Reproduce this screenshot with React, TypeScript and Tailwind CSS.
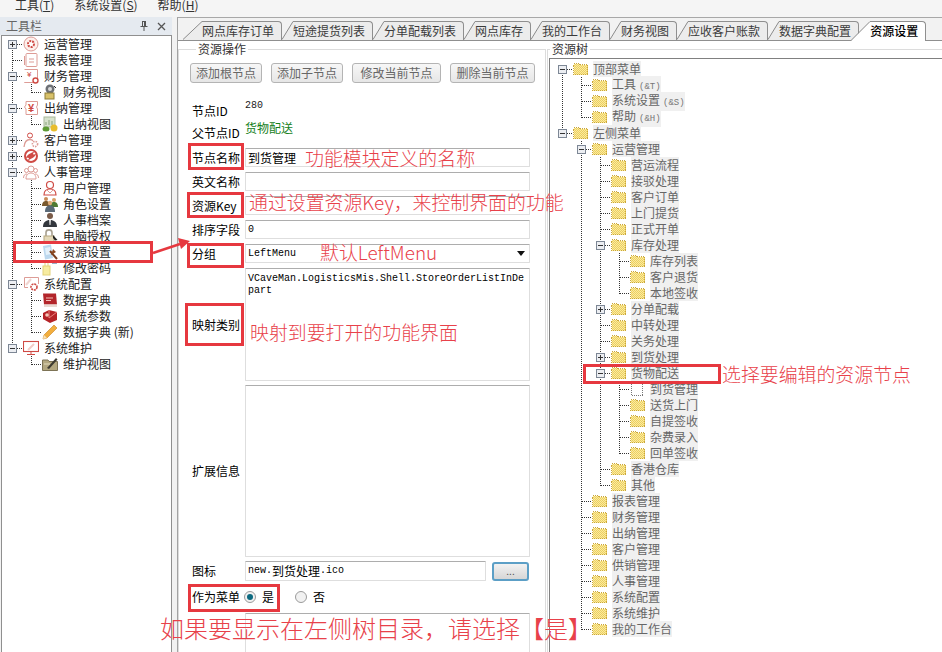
import React from 'react';

type TreeNode = {
  label: React.ReactNode;
  icon?: string;
  open?: boolean;
  children?: TreeNode[];
  closed?: boolean;
};

const cjk = "font-['Noto_Sans_CJK_SC',sans-serif]";
const mono = "font-['Liberation_Mono','Noto_Sans_CJK_SC',monospace]";

const tabs = ['网点库存订单', '短途提货列表', '分单配载列表', '网点库存', '我的工作台', '财务视图', '应收客户账款', '数据字典配置', '资源设置'];

const f = (label: React.ReactNode, children?: TreeNode[], closed?: boolean): TreeNode => ({ label, children, closed });

const Amp = ({ s }: { s: string }) => <span className={`${mono} ml-[3px] text-[9px] text-[#777]`}>{s}</span>;

const leftTree: TreeNode[] = [
  { label: '运营管理', icon: 'gear', closed: true, children: [] },
  { label: '报表管理', icon: 'report' },
  { label: '财务管理', icon: 'finance', children: [{ label: '财务视图', icon: 'financeView' }] },
  { label: '出纳管理', icon: 'cashier', children: [{ label: '出纳视图', icon: 'cashierView' }] },
  { label: '客户管理', icon: 'customer', closed: true, children: [] },
  { label: '供销管理', icon: 'supply', closed: true, children: [] },
  {
    label: '人事管理',
    icon: 'hr',
    children: [
      { label: '用户管理', icon: 'user' },
      { label: '角色设置', icon: 'role' },
      { label: '人事档案', icon: 'archive' },
      { label: '电脑授权', icon: 'lock' },
      { label: '资源设置', icon: 'resource' },
      { label: '修改密码', icon: 'password' },
    ],
  },
  {
    label: '系统配置',
    icon: 'syscfg',
    children: [
      { label: '数据字典', icon: 'dict' },
      { label: '系统参数', icon: 'param' },
      { label: '数据字典 (新)', icon: 'pencil' },
    ],
  },
  { label: '系统维护', icon: 'monitor', children: [{ label: '维护视图', icon: 'maint' }] },
];

const resourceTree: TreeNode[] = [
  f('顶部菜单', [
    f(<>工具<Amp s="(&T)" /></>),
    f(<>系统设置<Amp s="(&S)" /></>),
    f(<>帮助<Amp s="(&H)" /></>),
  ]),
  f('左侧菜单', [
    f('运营管理', [
      f('营运流程'),
      f('接驳处理'),
      f('客户订单'),
      f('上门提货'),
      f('正式开单'),
      f('库存处理', [f('库存列表'), f('客户退货'), f('本地签收')]),
      f('分单配载', [], true),
      f('中转处理'),
      f('关务处理'),
      f('到货处理', [], true),
      f('货物配送', [
        { label: '到货管理', icon: 'blank' },
        f('送货上门'),
        f('自提签收'),
        f('杂费录入'),
        f('回单签收'),
      ]),
      f('香港仓库'),
      f('其他'),
    ]),
    f('报表管理'),
    f('财务管理'),
    f('出纳管理'),
    f('客户管理'),
    f('供销管理'),
    f('人事管理'),
    f('系统配置'),
    f('系统维护'),
    f('我的工作台'),
  ]),
];

function Guide({ on }: { on: boolean }) {
  return (
    <svg width="19" height="16" className="shrink-0" shapeRendering="crispEdges">
      {on && <path d="M9.5 0V16" stroke="#333" strokeDasharray="1 1" />}
    </svg>
  );
}

function Connector({ node, last, first }: { node: TreeNode; last: boolean; first: boolean }) {
  const hasKids = !!node.children;
  return (
    <svg width="19" height="16" className="shrink-0" shapeRendering="crispEdges">
      <path d={`M9.5 ${first ? 8 : 0}V${last ? 9 : 16}`} stroke="#333" strokeDasharray="1 1" />
      <path d="M9.5 8.5H19" stroke="#333" strokeDasharray="1 1" />
      {hasKids && (
        <>
          <rect x="5.5" y="4.5" width="8" height="8" fill="#eceef2" stroke="#7d8795" />
          <path d="M7 8.5H12" stroke="#333" />
          {node.closed && <path d="M9.5 6V11" stroke="#333" />}
        </>
      )}
    </svg>
  );
}

function Folder({ id }: { id: string }) {
  return (
    <svg width="15" height="14" viewBox="0 0 15 14" className="shrink-0" shapeRendering="crispEdges">
      <defs>
        <pattern id={id} width="2" height="2" patternUnits="userSpaceOnUse">
          <rect width="2" height="2" fill="#fbeb9e" />
          <rect width="1" height="1" fill="#eccf62" />
          <rect x="1" y="1" width="1" height="1" fill="#eccf62" />
        </pattern>
      </defs>
      <path d="M0.5 3.5V12.5H14.5V2.5H7L6 1.5H1.5Z" fill={`url(#${id})`} stroke="#c9a63c" strokeDasharray="1 1" />
    </svg>
  );
}

function BlankPage() {
  return (
    <svg width="15" height="14" viewBox="0 0 15 14" className="shrink-0" shapeRendering="crispEdges">
      <rect x="1.5" y="0.5" width="11" height="13" fill="#fff" stroke="#777" strokeDasharray="1 1" />
    </svg>
  );
}

function NavIcon({ name }: { name?: string }) {
  const red = '#cf4b45';
  const pale = '#dd9c96';
  let body: React.ReactNode = null;
  if (name === 'gear')
    body = (
      <>
        <circle cx="8" cy="8" r="7" fill="#fdf0ec" stroke={pale} />
        <circle cx="8" cy="8" r="3" fill="#fff" stroke={red} strokeWidth="2" strokeDasharray="2 1" />
      </>
    );
  if (name === 'report')
    body = (
      <>
        <rect x="3" y="1.5" width="11" height="13" rx="1" fill="#fff" stroke={pale} />
        <path d="M1.5 4V13M6 7H11M6 10H11" stroke={pale} />
      </>
    );
  if (name === 'finance')
    body = (
      <>
        <path d="M1.5 1.5H14.5V10M11 14.5H1.5Z" fill="#fff" stroke={pale} />
        <text x="4" y="9" fontSize="8" fill={red} fontFamily="Liberation Sans">¥</text>
        <circle cx="12.5" cy="12.5" r="2.5" fill="#fff" stroke={red} strokeWidth="1.4" />
      </>
    );
  if (name === 'cashier')
    body = (
      <>
        <path d="M3 1.5H14.5V5L13.5 7L14.5 9V14.5H3V9L1.5 7L3 5Z" fill="#fff" stroke={pale} />
        <text x="5" y="12" fontSize="11" fill={red} fontWeight="bold" fontFamily="Liberation Sans">¥</text>
      </>
    );
  if (name === 'customer')
    body = (
      <>
        <circle cx="7" cy="3.5" r="2.5" fill="#fff" stroke={red} />
        <path d="M1 15C1.5 10 4 7.5 7 7.5C8.5 7.5 9.5 8 10 9" fill="none" stroke={pale} strokeWidth="1.3" />
        <circle cx="12" cy="12" r="2.6" fill="#fff" stroke={pale} strokeWidth="1.6" strokeDasharray="1.5 1" />
      </>
    );
  if (name === 'supply')
    body = (
      <>
        <circle cx="8" cy="8" r="6" fill="none" stroke={red} strokeWidth="2" />
        <path d="M2.5 10C5 6 8 5 11.5 3.5C9.5 6 9 7 13.5 6C11 10 7.5 11 4.5 12.5C6.5 10.5 7 9.5 2.5 10Z" fill={red} />
      </>
    );
  if (name === 'hr')
    body = (
      <>
        <circle cx="3.5" cy="6.5" r="2" fill="none" stroke={pale} />
        <circle cx="12.5" cy="6.5" r="2" fill="none" stroke={pale} />
        <path d="M0.5 14C0.5 11 2 10 4 10M15.5 14C15.5 11 14 10 12 10" fill="none" stroke={pale} />
        <circle cx="8" cy="5" r="3" fill="#fff" stroke={pale} />
        <path d="M3 15C3 11 5 9 8 9C11 9 13 11 13 15Z" fill="#fff" stroke={pale} />
      </>
    );
  if (name === 'user')
    body = (
      <>
        <circle cx="8" cy="5" r="3.5" fill="#fff" stroke={red} strokeWidth="1.2" />
        <path d="M2 15C2 11 4.5 9 8 9C11.5 9 14 11 14 15Z" fill="#fff" stroke={red} strokeWidth="1.2" />
        <path d="M5 10L8 13L11 10" fill="none" stroke={pale} />
      </>
    );
  if (name === 'role')
    body = (
      <>
        <circle cx="4" cy="3" r="2" fill="#c98b58" />
        <path d="M0 10C0 6 2 5 4 5C6 5 8 6 8 10Z" fill="#7a5a2e" />
        <circle cx="12" cy="4" r="2" fill="#d9a066" />
        <path d="M8 11C8 7 10 6 12 6C14 6 16 7 16 11Z" fill="#4f7a33" />
        <circle cx="8" cy="7" r="2.2" fill="#e0ad7a" />
        <path d="M3 16C3 11 5 9.5 8 9.5C11 9.5 13 11 13 16Z" fill="#5b6a78" />
      </>
    );
  if (name === 'archive')
    body = (
      <>
        <circle cx="8" cy="4" r="3" fill="#7a5b48" />
        <path d="M1 15C1 10 4 8 8 8C12 8 15 10 15 15Z" fill="#33373d" />
        <path d="M7 8H9L8.5 13H7.5Z" fill="#ddd" />
      </>
    );
  if (name === 'lock')
    body = (
      <>
        <path d="M4 8V4.5C4 1 10 1 10 4.5V8" fill="none" stroke="#a8a090" strokeWidth="1.6" />
        <rect x="2" y="8" width="10" height="7" fill="#e4d9b8" stroke="#b5a880" />
        <path d="M11 7L15.5 12L13 12.5L11 10Z" fill="#222" />
      </>
    );
  if (name === 'resource')
    body = (
      <>
        <path d="M1 2L9 0.5L11 14L3 15.5Z" fill="#bcd8ee" />
        <path d="M3 4L8 3L9 10L4 11Z" fill="#e4f1fa" />
        <path d="M8 7L15 15" stroke="#7a3d1c" strokeWidth="2" />
        <path d="M11 5L14 8L9 11Z" fill="#8c4a22" />
      </>
    );
  if (name === 'password')
    body = (
      <>
        <rect x="1" y="6" width="7" height="9" fill="#f7eca0" stroke="#e3d27a" />
        <path d="M3 6V3C3 1 6 1 6 3V6" fill="none" stroke="#e3d27a" />
        <path d="M10 3H15" stroke="#6f8fb0" strokeWidth="1.4" />
      </>
    );
  if (name === 'syscfg')
    body = (
      <>
        <path d="M5 11.5H1.5V1.5H15.5V8" fill="#fff" stroke={pale} />
        <path d="M3 9L8 3" stroke="#f0d4d0" strokeWidth="2" />
        <circle cx="11" cy="11" r="3" fill="#fff" stroke={red} strokeWidth="1.6" strokeDasharray="2 .8" />
      </>
    );
  if (name === 'dict')
    body = (
      <>
        <path d="M1 1.5H14L15 12.5H2Z" fill="#b3262b" />
        <path d="M2 12.5H15V15H2Z" fill="#e9d9d2" />
        <path d="M4 6H11M4 8.5H9" stroke="#f3c0b8" />
      </>
    );
  if (name === 'param')
    body = (
      <>
        <path d="M1 5L7 2L15 4V12L8 15L1 11Z" fill="#b52327" />
        <path d="M7 2V10L15 4" fill="none" stroke="#e9817d" />
        <circle cx="5" cy="7" r="1.8" fill="#f4c8b8" />
      </>
    );
  if (name === 'pencil')
    body = (
      <>
        <path d="M12 1L15 4L5 14L1 15L2 11Z" fill="#f2ae3d" stroke="#c9821f" strokeWidth=".6" />
        <path d="M2 11L5 14L1 15Z" fill="#f7e2b8" />
      </>
    );
  if (name === 'monitor')
    body = (
      <>
        <rect x="0.5" y="1.5" width="15" height="10" fill="#fff" stroke={red} strokeWidth="1.1" />
        <path d="M5 10L11 4" stroke="#f1cdc8" strokeWidth="2" />
        <path d="M8 11.5V14M4 14.5H12" stroke={red} />
      </>
    );
  if (name === 'maint')
    body = (
      <>
        <path d="M0.5 4H6L7 5.5H15.5V14.5H0.5Z" fill="#b3a77f" stroke="#7d7355" />
        <path d="M5 12L14 2L15.5 3.5L7 13Z" fill="#3d3a30" />
        <path d="M2 8H8" stroke="#e4dcc0" />
      </>
    );
  if (name === 'financeView')
    body = (
      <>
        <circle cx="8" cy="5" r="4.5" fill="#6d7075" />
        <circle cx="8" cy="5" r="2" fill="#d8d8d8" />
        <rect x="3" y="9" width="9" height="6" fill="#d8c16a" stroke="#8f7f3a" />
        <path d="M12 2L14 4" stroke="#222" />
      </>
    );
  if (name === 'cashierView')
    body = (
      <>
        <rect x="2" y="1" width="11" height="10" fill="#d7e2cc" stroke="#a9b89b" />
        <path d="M4 9V6M7 9V4M10 9V5" stroke="#88a37a" />
        <ellipse cx="4" cy="13" rx="3.5" ry="2.5" fill="#5e9b34" />
        <ellipse cx="12" cy="12" rx="3.5" ry="3.5" fill="#e8bd2c" />
      </>
    );
  return (
    <svg width="16" height="16" viewBox="0 0 16 16" className="shrink-0">
      {body}
    </svg>
  );
}

function TreeRows({
  nodes,
  guides,
  variant,
  path = 'n',
}: {
  nodes: TreeNode[];
  guides: boolean[];
  variant: 'nav' | 'res';
  path?: string;
}) {
  return (
    <>
      {nodes.map((node, i) => {
        const last = i === nodes.length - 1;
        const key = `${path}-${i}`;
        return (
          <React.Fragment key={key}>
            <div className="flex h-4 items-center">
              {guides.map((g, j) => (
                <Guide key={j} on={g} />
              ))}
              <Connector node={node} last={last} first={guides.length === 0 && i === 0} />
              {variant === 'nav' ? (
                <>
                  <span className="ml-px flex">
                    <NavIcon name={node.icon} />
                  </span>
                  <span className="ml-[5px] whitespace-nowrap text-xs leading-4 text-[#222]">{node.label}</span>
                </>
              ) : (
                <>
                  <span className="ml-px flex">{node.icon === 'blank' ? <BlankPage /> : <Folder id={key} />}</span>
                  <span className="ml-[5px] whitespace-nowrap bg-[#f0f0f0] text-xs leading-4 text-[#666]">{node.label}</span>
                </>
              )}
            </div>
            {node.children && node.children.length > 0 && (
              <TreeRows nodes={node.children} guides={[...guides, !last]} variant={variant} path={key} />
            )}
          </React.Fragment>
        );
      })}
    </>
  );
}

function Tab({ label, index }: { label: string; index: number }) {
  const active = index === tabs.length - 1;
  const wide = index === 0 || active;
  const w = wide ? 19 : 11;
  return (
    <div className={`flex ${active ? 'relative z-10 -mb-px -ml-2 h-5 text-black' : 'h-[19px] text-[#3a3a3a]'}`}>
      <svg width={w} height={active ? 20 : 19} className="shrink-0">
        <path
          d={`M0 ${active ? 20 : 19}L${w} 0.5V${active ? 20 : 19}Z`}
          fill={active ? '#fff' : '#ececec'}
        />
        <path d={`M0 ${active ? 19.5 : 18.5}L${w} 0.5`} stroke="#8a8a8a" fill="none" />
      </svg>
      <div
        className={`whitespace-nowrap rounded-tr-[4px] border-t border-r border-[#8f8f8f] pr-[7px] text-xs leading-[18px] ${
          active ? 'bg-white font-medium' : 'bg-[#ececec]'
        }`}
      >
        {label}
      </div>
    </div>
  );
}

function ActionButton({ label, w }: { label: string; w: string }) {
  return (
    <div
      className={`${w} flex h-5 items-center justify-center rounded-[3px] border border-[#b4b4b4] bg-gradient-to-b from-[#f7f7f7] to-[#e6e6e6] text-xs text-[#666]`}
    >
      {label}
    </div>
  );
}

function Label({ children }: { children: React.ReactNode }) {
  return <div className="w-[53px] shrink-0 whitespace-nowrap text-xs leading-4 text-black">{children}</div>;
}

function Field({ children, className = '' }: { children?: React.ReactNode; className?: string }) {
  return (
    <div
      className={`${mono} rounded-[1px] border border-[#dedede] border-t-[#adadad] bg-white px-[2px] text-[10px] leading-3 text-black ${className}`}
    >
      {children}
    </div>
  );
}

function FormRow({ label, children }: { label: string; children?: React.ReactNode }) {
  return (
    <div className="mb-[5px] flex items-center">
      <Label>{label}</Label>
      <Field className="flex h-[19px] w-[285px] items-center">{children}</Field>
    </div>
  );
}

function Radio({ on }: { on?: boolean }) {
  return (
    <svg width="12" height="12" viewBox="0 0 12 12" className="shrink-0">
      <circle cx="6" cy="6" r="5.5" fill="#f1f1f1" stroke="#9a9a9a" />
      {on && <circle cx="6" cy="6" r="3" fill="#0d6a80" />}
    </svg>
  );
}

function ResourceForm() {
  return (
    <fieldset className="h-[640px] w-[368px] shrink-0 border border-[#dcdcdc] pl-[11px]">
      <legend className="ml-[6px] px-[2px] text-xs leading-4 text-[#333]">资源操作</legend>
      <div className="mt-[6px] flex gap-[9px]">
        <ActionButton label="添加根节点" w="w-[72px]" />
        <ActionButton label="添加子节点" w="w-[72px]" />
        <ActionButton label="修改当前节点" w="w-[89px]" />
        <ActionButton label="删除当前节点" w="w-[85px]" />
      </div>
      <div className="mt-[18px] ml-[2px]">
        <div className="flex h-[23px]">
          <div className="pt-[2px]">
            <Label>节点ID</Label>
          </div>
          <span className={`${mono} -mt-px text-[10px] leading-3 text-[#222]`}>280</span>
        </div>
        <div className="flex h-[24px]">
          <div className="pt-[1px]">
            <Label>父节点ID</Label>
          </div>
          <span className="-mt-[4px] text-xs leading-4 text-[#15801a]">货物配送</span>
        </div>
        <FormRow label="节点名称">
          <span className={`${cjk} text-xs`}>到货管理</span>
        </FormRow>
        <FormRow label="英文名称" />
        <FormRow label="资源Key" />
        <FormRow label="排序字段">0</FormRow>
        <div className="mb-[5px] flex items-center">
          <Label>分组</Label>
          <Field className="flex h-[19px] w-[285px] items-center justify-between pr-[4px]">
            LeftMenu
            <svg width="8" height="5">
              <path d="M0 0H8L4 5Z" fill="#111" />
            </svg>
          </Field>
        </div>
        <div className="mb-[4px] flex items-center">
          <Label>映射类别</Label>
          <Field className="h-[113px] w-[285px] pt-[4px]">
            VCaveMan.LogisticsMis.Shell.StoreOrderListInDe
            <br />
            part
          </Field>
        </div>
        <div className="mb-[4px] flex items-center">
          <Label>扩展信息</Label>
          <Field className="h-[172px] w-[285px]" />
        </div>
        <div className="mb-[6px] flex items-center">
          <Label>图标</Label>
          <Field className="flex h-[20px] w-[241px] items-center">
            new.<span className={`${cjk} text-xs`}>到货处理</span>.ico
          </Field>
          <div className="ml-[6px] flex h-[19px] w-[37px] items-center justify-center rounded-[3px] border-2 border-[#5c9fc6] bg-gradient-to-b from-[#f2f2f2] to-[#d6d6d6] text-[10px] leading-none text-[#555]">
            ...
          </div>
        </div>
        <div className="flex h-5 items-center">
          <div className="w-[52px] shrink-0 whitespace-nowrap text-xs leading-4 text-black">作为菜单</div>
          <Radio on />
          <span className="ml-[6px] text-xs text-black">是</span>
          <span className="ml-[21px] flex items-center">
            <Radio />
          </span>
          <span className="ml-[6px] text-xs text-black">否</span>
        </div>
        <div className="mt-[6px] ml-[53px]">
          <Field className="h-[60px] w-[285px]" />
        </div>
      </div>
    </fieldset>
  );
}

function ResourcePane() {
  return (
    <fieldset className="ml-px h-[640px] w-[420px] shrink-0 border border-[#dcdcdc] pl-px">
      <legend className="ml-px px-[2px] text-xs leading-4 text-[#333]">资源树</legend>
      <div className="mt-[1px] h-[620px] border border-[#808080] bg-white pt-[2px] pl-[3px]">
        <TreeRows nodes={resourceTree} guides={[]} variant="res" />
      </div>
    </fieldset>
  );
}

function Note({ className, children }: { className: string; children: React.ReactNode }) {
  return (
    <div className={`absolute whitespace-nowrap leading-none font-light text-[#e8414a] ${className}`}>{children}</div>
  );
}

function Box({ className }: { className: string }) {
  return <div className={`absolute border-[3px] border-[#e6383f] ${className}`} />;
}

export default function App() {
  return (
    <div className={`${cjk} relative flex h-[652px] w-[942px] flex-col overflow-hidden bg-[#f2f2f2]`}>
      <div className="flex h-[17px] shrink-0 items-start gap-[20px] overflow-hidden bg-[#f5f5f5] pl-[15px] text-xs leading-[9px] text-[#333]">
        <span>工具(<u>T</u>)</span>
        <span>系统设置(<u>S</u>)</span>
        <span>帮助(<u>H</u>)</span>
      </div>

      <div className="flex min-h-0 flex-1">
        <aside className="flex w-[172px] shrink-0 flex-col">
          <div className="flex h-[18px] shrink-0 items-center justify-between bg-[#e5eaf0] pr-[6px] pl-[6px] text-xs text-[#666]">
            工具栏
            <span className="flex items-center gap-[8px]">
              <svg width="10" height="12" viewBox="0 0 10 12">
                <path d="M3 1H7V6H8.5V7H5.5V11H4.5V7H1.5V6H3ZM4 2V6H5V2Z" fill="#555" />
              </svg>
              <svg width="9" height="9" viewBox="0 0 9 9">
                <path d="M1 1L8 8M8 1L1 8" stroke="#555" strokeWidth="1.3" />
              </svg>
            </span>
          </div>
          <div className="ml-px flex-1 border border-b-0 border-[#8f8f8f] bg-white pl-px">
            <TreeRows nodes={leftTree} guides={[]} variant="nav" />
          </div>
        </aside>

        <main className="ml-[5px] flex min-w-0 flex-1 flex-col border-l border-[#a3a3a3]">
          <div className="flex h-6 shrink-0 items-end border-t border-b border-t-[#a8a8a8] border-b-[#8f8f8f] pl-[5px]">
            {tabs.map((t, i) => (
              <Tab key={t} label={t} index={i} />
            ))}
          </div>
          <div className="flex min-h-0 flex-1 overflow-hidden bg-white">
            <ResourceForm />
            <ResourcePane />
          </div>
        </main>
      </div>

      <Box className="top-[241px] left-[13px] h-[22px] w-[140px]" />
      <Box className="top-[143px] left-[188px] h-[27px] w-[56px]" />
      <Box className="top-[192px] left-[187px] h-[26px] w-[57px]" />
      <Box className="top-[243px] left-[187px] h-[25px] w-[57px]" />
      <Box className="top-[303px] left-[185px] h-[43px] w-[59px]" />
      <Box className="top-[584px] left-[188px] h-[28px] w-[92px]" />
      <Box className="top-[364px] left-[583px] h-[20px] w-[138px]" />
      <svg width="40" height="24" className="absolute top-[237px] left-[152px]">
        <path d="M1 16L28 7" stroke="#e6383f" strokeWidth="2.5" />
        <path d="M38 4L26 1L29 12Z" fill="#e6383f" />
      </svg>

      <Note className="top-[149px] left-[305px] text-[18.9px]">功能模块定义的名称</Note>
      <Note className="top-[193px] left-[249px] text-[18.9px]">通过设置资源Key，来控制界面的功能</Note>
      <Note className="top-[243px] left-[320px] text-[18.9px]">默认LeftMenu</Note>
      <Note className="top-[323px] left-[250px] text-[18.9px]">映射到要打开的功能界面</Note>
      <Note className="top-[365px] left-[722px] text-[18.9px]">选择要编辑的资源节点</Note>
      <Note className="top-[616px] left-[160px] text-2xl">如果要显示在左侧树目录，请选择【是】</Note>
    </div>
  );
}
